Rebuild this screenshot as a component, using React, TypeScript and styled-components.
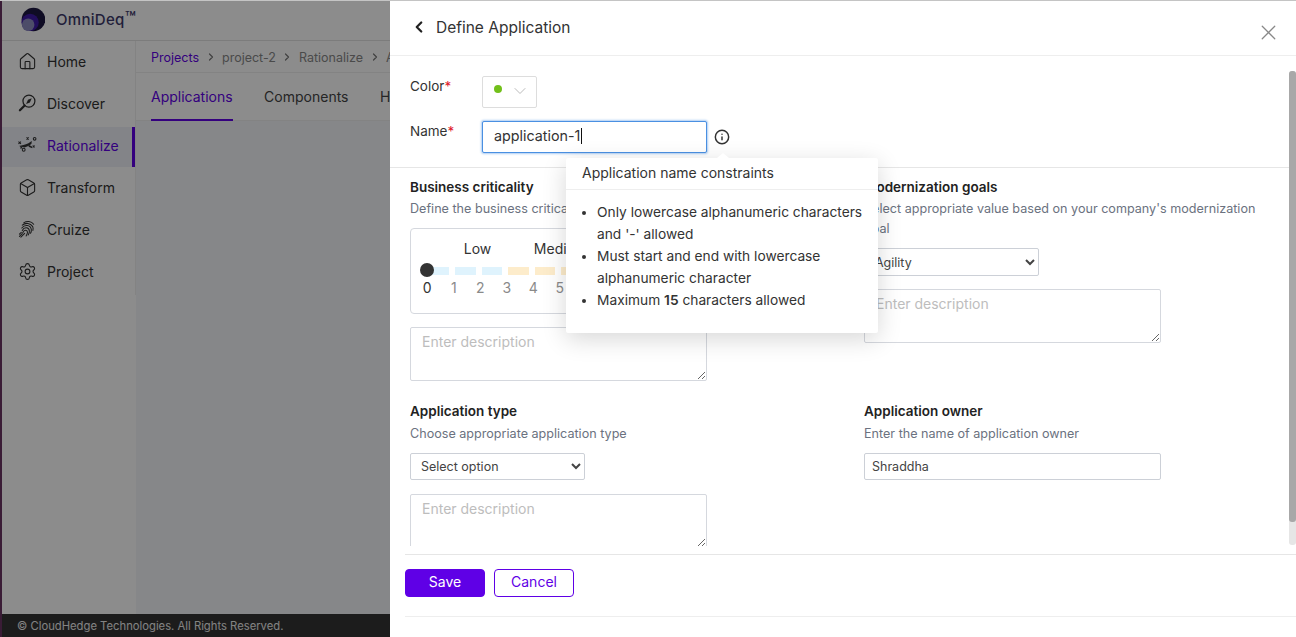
import React from 'react';
import styled, {createGlobalStyle} from 'styled-components';
import {Box, ChevronDown, ChevronLeft, ChevronRight, Home, Info, Settings, X} from 'lucide-react';

const font = `Inter, "Noto Sans", Roboto, sans-serif`;

const GlobalStyle = createGlobalStyle`
	html, body {
		margin: 0;
		height: 100%;
		overflow: hidden;
		background: #fff;
	}
	* {
		box-sizing: border-box;
	}
	body {
		font-family: ${font};
		color: #333;
	}
`;

const LogoMark = () => (
	<svg width='25' height='25' viewBox='0 0 26 26'>
		<circle cx='14' cy='13' r='12.3' fill='#1d1742' />
		<circle cx='10.5' cy='16' r='9' fill='#3f1aa8' />
		<circle cx='8.5' cy='18.5' r='6.5' fill='#8d8cc0' />
	</svg>
);

const DiscoverIcon = () => (
	<svg width='20' height='20' viewBox='0 0 20 20' fill='none' stroke='currentColor' strokeWidth='1.3'>
		<circle cx='11.5' cy='8' r='6.3' />
		<path d='M8.5 11l2-4.5 4-1.5-2 4.5z' fill='currentColor' stroke='none' />
		<path d='M7 12.6L2 17.6' strokeWidth='2.4' strokeLinecap='round' />
	</svg>
);

const TacticIcon = () => (
	<svg width='20' height='19' viewBox='0 0 20 19' fill='none' stroke='currentColor' strokeWidth='1.1'>
		<path d='M.5 5.500l2.600 2.400M3.100 5.500L.5 7.900M9 1l2.200 2.200M11.200 1L9 3.200M2.500 10.500l2 2M4.500 10.500l-2 2M15.500 9.500l2 2M17.500 9.500l-2 2' />
		<circle cx='6' cy='14' r='1.500' />
		<circle cx='17.500' cy='2.500' r='1.400' />
		<path d='M1 10c3-.4 6.500-1 10-2.800l3.500-2.500-.3 3-2.200 1.800-5 2z' fill='currentColor' stroke='none' />
		<path d='M12 9l3 1.800v1.700l-4-1.800z' fill='currentColor' stroke='none' />
	</svg>
);

const PrintIcon = () => (
	<svg width='20' height='20' viewBox='0 0 20 20' fill='none' stroke='currentColor' strokeWidth='1.1' strokeLinecap='round'>
		<path d='M6 3.500C9 1.500 14 1.500 16.500 5' />
		<path d='M4.500 6C8 3 13 3.500 15.500 7.500c.5 1.200.5 2.500.2 4' />
		<path d='M4 9c3-4 9-3.500 10 1.500.2 1.500-.2 3-.8 4' />
		<path d='M4.500 11.500c2-4 7-3.500 7.500.5.200 1.500-.5 3-1.300 4.300' />
		<path d='M5 14c1.500-4 5-3 5-.5 0 1.200-.6 2.500-1.500 3.800' />
		<path d='M1.500 17.800l3-3M3 18.500l4-4M1.500 15.500l2-2' />
	</svg>
);

const navItems = [
	{label: 'Home', icon: <Home size={19} strokeWidth={1.4} />},
	{label: 'Discover', icon: <DiscoverIcon />},
	{label: 'Rationalize', icon: <TacticIcon />, active: true},
	{label: 'Transform', icon: <Box size={19} strokeWidth={1.4} />},
	{label: 'Cruize', icon: <PrintIcon />},
	{label: 'Project', icon: <Settings size={19} strokeWidth={1.4} />},
];

const ticks = [0, 1, 2, 3, 4, 5, 6, 7, 8, 9, 10];

const App = () => {
	return (
		<>
			<GlobalStyle />
			<Page>
				<Backdrop>
					<TopBar>
						<LogoMark />
						<Brand>
							OmniDeq<BrandTm>™</BrandTm>
						</Brand>
					</TopBar>
					<Columns>
						<Sidebar>
							{navItems.map(item => (
								<NavItem key={item.label} $active={item.active}>
									<NavIcon>{item.icon}</NavIcon>
									{item.label}
								</NavItem>
							))}
						</Sidebar>
						<Main>
							<Breadcrumbs>
								<Crumb $link>Projects</Crumb>
								<ChevronRight size={12} strokeWidth={2.4} />
								<Crumb>project-2</Crumb>
								<ChevronRight size={12} strokeWidth={2.4} />
								<Crumb>Rationalize</Crumb>
								<ChevronRight size={12} strokeWidth={2.4} />
								<Crumb>Applications</Crumb>
							</Breadcrumbs>
							<Tabs>
								<Tab $active>Applications</Tab>
								<Tab>Components</Tab>
								<Tab>Hosts</Tab>
							</Tabs>
						</Main>
					</Columns>
					<PageFooter>© CloudHedge Technologies. All Rights Reserved.</PageFooter>
					<Dim />
				</Backdrop>

				<Drawer>
					<DrawerHeader>
						<BackButton>
							<ChevronLeft size={18} strokeWidth={3} />
						</BackButton>
						<DrawerTitle>Define Application</DrawerTitle>
						<CloseButton>
							<X size={25} strokeWidth={1.2} />
						</CloseButton>
					</DrawerHeader>

					<DrawerBody>
						<ScrollTrack>
							<ScrollThumb />
						</ScrollTrack>
						<IdentityBlock>
							<FieldRow>
								<RowLabel>
									Color<Required>*</Required>
								</RowLabel>
								<ColorPicker>
									<ColorDot />
									<ChevronDown size={20} strokeWidth={1.2} color='#bbb' />
								</ColorPicker>
							</FieldRow>
							<FieldRow>
								<RowLabel>
									Name<Required>*</Required>
								</RowLabel>
								<NameField>
									<NameInput defaultValue='application-1' />
									<Caret />
								</NameField>
								<InfoIcon>
									<Info size={16} strokeWidth={2.2} />
								</InfoIcon>
							</FieldRow>
							<Popover>
								<PopoverTitle>Application name constraints</PopoverTitle>
								<PopoverList>
									<li>Only lowercase alphanumeric characters and '-' allowed</li>
									<li>Must start and end with lowercase alphanumeric character</li>
									<li>
										Maximum <strong>15</strong> characters allowed
									</li>
								</PopoverList>
							</Popover>
						</IdentityBlock>

						<SectionGrid>
							<Section>
								<SectionTitle>Business criticality</SectionTitle>
								<SectionHint>Define the business criticality of this application</SectionHint>
								<SliderCard>
									<SliderLabels>
										<SliderLabel>Low</SliderLabel>
										<SliderLabel>Medium</SliderLabel>
										<SliderLabel>High</SliderLabel>
									</SliderLabels>
									<SliderTrack>
										<SliderThumb />
										{ticks.slice(1).map(tick => (
											<TrackPiece key={tick} $level={tick < 4 ? 'low' : tick < 7 ? 'mid' : 'high'} />
										))}
									</SliderTrack>
									<TickRow>
										{ticks.map(tick => (
											<Tick key={tick} $current={tick === 0}>
												{tick}
											</Tick>
										))}
									</TickRow>
								</SliderCard>
								<Description placeholder='Enter description' />
							</Section>

							<Section>
								<SectionTitle>Modernization goals</SectionTitle>
								<SectionHint>Select appropriate value based on your company's modernization goal</SectionHint>
								<Dropdown $width={175} $height={28} defaultValue='Agility'>
									<option>Agility</option>
								</Dropdown>
								<Description placeholder='Enter description' />
							</Section>

							<Section>
								<SectionTitle>Application type</SectionTitle>
								<SectionHint>Choose appropriate application type</SectionHint>
								<Dropdown $width={175} $height={27} defaultValue='Select option'>
									<option>Select option</option>
								</Dropdown>
								<Description placeholder='Enter description' />
							</Section>

							<Section>
								<SectionTitle>Application owner</SectionTitle>
								<SectionHint>Enter the name of application owner</SectionHint>
								<OwnerInput defaultValue='Shraddha' />
							</Section>
						</SectionGrid>
					</DrawerBody>

					<DrawerFooter>
						<SaveButton>Save</SaveButton>
						<CancelButton>Cancel</CancelButton>
					</DrawerFooter>
				</Drawer>
			</Page>
		</>
	);
};

export default App;

const Page = styled.div`
	display: flex;
	height: 637px;
	width: 1296px;
	overflow: hidden;
	border-top: 1px solid #c4c4c4;
`;

const Backdrop = styled.div`
	position: relative;
	display: flex;
	flex-direction: column;
	width: 390px;
	flex-shrink: 0;
	overflow: hidden;
	background: #fff;
	border-left: 2px solid #3a1c36;
`;

const Dim = styled.div`
	position: absolute;
	inset: 0;
	background: rgba(0, 0, 0, 0.45);
`;

const TopBar = styled.div`
	display: flex;
	align-items: center;
	gap: 11px;
	height: 40px;
	flex-shrink: 0;
	padding-left: 18px;
	padding-bottom: 2px;
	border-bottom: 1px solid #e2e2e2;
`;

const Brand = styled.span`
	font-size: 15px;
	font-weight: 500;
	letter-spacing: 0.3px;
	color: #3d3a6b;
`;

const BrandTm = styled.span`
	font-size: 18px;
	line-height: 0;
	letter-spacing: 0;
`;

const Columns = styled.div`
	display: flex;
	flex: 1;
`;

const Sidebar = styled.nav`
	display: flex;
	flex-direction: column;
	gap: 2px;
	width: 134px;
	height: 254px;
	flex-shrink: 0;
	padding-top: 2px;
	border-right: 1px solid #eee;
`;

const NavItem = styled.div<{$active?: boolean}>`
	display: flex;
	align-items: center;
	gap: 10px;
	height: 40px;
	padding: 0 0 4px 16px;
	font-size: 14px;
	color: ${p => (p.$active ? '#5f00e6' : '#333')};
	background: ${p => (p.$active ? '#eef0f8' : 'transparent')};
	border-right: ${p => (p.$active ? '3px solid #5f00e6' : 'none')};
	svg {
		color: #333;
	}
`;

const NavIcon = styled.span`
	display: flex;
	justify-content: center;
	width: 19px;
`;

const Main = styled.main`
	flex: 1;
	min-width: 0;
	background: #f5f6fa;
`;

const Breadcrumbs = styled.div`
	display: flex;
	align-items: center;
	gap: 5.5px;
	height: 32px;
	padding: 1px 0 0 15px;
	background: #fff;
	border-bottom: 1px solid #eee;
	color: #777;
	white-space: nowrap;

	svg {
		flex-shrink: 0;
	}
`;

const Crumb = styled.span<{$link?: boolean}>`
	flex-shrink: 0;
	font-size: 12.5px;
	color: ${p => (p.$link ? '#5f00e6' : '#888')};
`;

const Tabs = styled.div`
	display: flex;
	gap: 31.5px;
	height: 48px;
	padding-left: 15px;
	background: #fff;
	border-bottom: 1px solid #eee;
	white-space: nowrap;
`;

const Tab = styled.div<{$active?: boolean}>`
	display: flex;
	flex-shrink: 0;
	align-items: center;
	height: 48px;
	font-size: 14px;
	color: ${p => (p.$active ? '#5f00e6' : '#444')};
	border-bottom: 2px solid ${p => (p.$active ? '#5f00e6' : 'transparent')};
`;

const PageFooter = styled.footer`
	display: flex;
	align-items: center;
	height: 23px;
	flex-shrink: 0;
	padding-left: 15px;
	background: #333;
	color: #eee;
	font-size: 11.25px;
	white-space: nowrap;
`;

const Drawer = styled.aside`
	display: flex;
	flex-direction: column;
	flex: 1;
	min-width: 0;
	background: #fff;
`;

const DrawerHeader = styled.header`
	display: flex;
	align-items: center;
	height: 55px;
	flex-shrink: 0;
	padding: 0 15px 0 20px;
	border-bottom: 1px solid #eee;
`;

const BackButton = styled.span`
	display: flex;
	width: 26px;
	margin-bottom: 2px;
	color: #222;
`;

const DrawerTitle = styled.h1`
	flex: 1;
	margin: 0 0 1px;
	font-size: 15.5px;
	font-weight: 400;
	color: #333;
`;

const CloseButton = styled.span`
	display: flex;
	margin-top: 8px;
	color: #888;
`;

const DrawerBody = styled.div`
	position: relative;
	height: 490px;
	flex-shrink: 0;
	overflow: hidden;
`;

const ScrollTrack = styled.div`
	position: absolute;
	top: 15px;
	right: 0;
	width: 7px;
	height: 474px;
	background: #e6e6e6;
	border-radius: 3px;
`;

const ScrollThumb = styled.div`
	height: 451px;
	background: #a8a8a8;
	border-radius: 3px;
`;

const IdentityBlock = styled.div`
	position: relative;
	display: flex;
	flex-direction: column;
	gap: 13px;
	height: 112px;
	margin-right: 7px;
	padding: 20px 0 0 20px;
	border-bottom: 1px solid #e6e6e6;
`;

const FieldRow = styled.div`
	display: flex;
	align-items: flex-start;
`;

const RowLabel = styled.label`
	width: 72px;
	padding-top: 2px;
	font-size: 13.5px;
	color: #333;
`;

const Required = styled.span`
	color: #e0202a;
`;

const ColorPicker = styled.div`
	display: flex;
	align-items: center;
	gap: 8px;
	width: 55px;
	height: 32px;
	padding: 0 0 2px 11px;
	border: 1px solid #ddd;
	border-radius: 2px;
`;

const ColorDot = styled.span`
	width: 8px;
	height: 8px;
	border-radius: 50%;
	background: #72c01a;
	margin-bottom: 4px;
`;

const NameField = styled.div`
	position: relative;
	display: flex;
`;

const NameInput = styled.input`
	width: 225px;
	height: 32px;
	padding: 0 11px 3px;
	border: 1px solid #4a90e2;
	border-radius: 2px;
	box-shadow: 0 0 2px 1px rgba(74, 144, 226, 0.45);
	outline: none;
	font-family: ${font};
	font-size: 14.3px;
	color: #333;
`;

const Caret = styled.span`
	position: absolute;
	top: 7px;
	left: 99px;
	width: 1px;
	height: 16px;
	background: #111;
`;

const InfoIcon = styled.span`
	display: flex;
	margin: 8px 0 0 7px;
	color: #333;
`;

const Popover = styled.div`
	position: absolute;
	top: 102px;
	left: 176px;
	z-index: 2;
	width: 312px;
	height: 175px;
	background: #fff;
	box-shadow: 0 6px 24px rgba(0, 0, 0, 0.16);
	border-radius: 2px;

	&::before {
		content: '';
		position: absolute;
		top: -5px;
		left: 151px;
		border-left: 6px solid transparent;
		border-right: 6px solid transparent;
		border-bottom: 5px solid #fff;
	}
`;

const PopoverTitle = styled.div`
	display: flex;
	align-items: center;
	height: 32px;
	padding: 0 0 2px 16px;
	border-bottom: 1px solid #eee;
	font-size: 14px;
	color: #333;
`;

const PopoverList = styled.ul`
	margin: 0;
	padding: 11px 0 0 31px;
	font-size: 13.75px;
	line-height: 22px;
	color: #333;

	strong {
		font-weight: 600;
	}
`;

const SectionGrid = styled.div`
	display: grid;
	grid-template-columns: 454px 1fr;
	grid-template-rows: 225px 224px;
	padding: 9px 0 0 20px;
`;

const SectionTitle = styled.h3`
	margin: 0;
	font-size: 13.5px;
	line-height: 20px;
	font-weight: 600;
	color: #222;
`;

const Section = styled.section`
	display: flex;
	flex-direction: column;
	align-items: flex-start;
	padding-right: 28px;

	&:nth-child(n + 3) ${SectionTitle} {
		margin: -1px 0 1px;
	}
`;

const SectionHint = styled.p`
	margin: 2px 0 9px;
	font-size: 12.6px;
	line-height: 20px;
	color: #6b7280;
`;

const SliderCard = styled.div`
	width: 297px;
	height: 86px;
	padding-top: 11px;
	border: 1px solid #d5d8de;
	border-radius: 4px;
`;

const SliderLabels = styled.div`
	display: grid;
	grid-template-columns: 83px 83px 83px;
	padding-left: 25px;
	font-size: 14px;
	line-height: 18px;
	color: #333;
`;

const SliderLabel = styled.span`
	text-align: center;
`;

const SliderTrack = styled.div`
	position: relative;
	display: flex;
	gap: 6px;
	height: 8px;
	margin: 9px 0 0 17.5px;
`;

const SliderThumb = styled.span`
	position: absolute;
	left: -8.5px;
	top: -4px;
	width: 14px;
	height: 14px;
	border-radius: 50%;
	background: #333;
`;

const TrackPiece = styled.span<{$level: 'low' | 'mid' | 'high'}>`
	width: 20.5px;
	flex-shrink: 0;
	background: ${p => (p.$level === 'low' ? '#dff3fd' : p.$level === 'mid' ? '#fdeccb' : '#fbd9d9')};
`;

const TickRow = styled.div`
	display: flex;
	margin: 4px 0 0 3px;
`;

const Tick = styled.span<{$current?: boolean}>`
	width: 26.5px;
	text-align: center;
	font-size: 14px;
	color: ${p => (p.$current ? '#333' : '#8a8a8a')};
`;

const Description = styled.textarea`
	width: 297px;
	height: 54px;
	margin-top: 13px;
	padding: 3px 11px;
	border: 1px solid #d5d8de;
	border-radius: 2px;
	outline: none;
	font-family: ${font};
	font-size: 14px;
	line-height: 22px;
	color: #333;

	&::placeholder {
		color: #bdbdbd;
	}
`;

const Dropdown = styled.select<{$width: number; $height: number}>`
	width: ${p => p.$width}px;
	height: ${p => p.$height}px;
	margin-bottom: ${p => 28 - p.$height}px;
	padding: 0 6px;
	background: #fff;
	border: 1px solid #ccd0d7;
	border-radius: 2px;
	outline: none;
	font-family: ${font};
	font-size: 12.5px;
	color: #444;
`;

const OwnerInput = styled.input`
	width: 297px;
	height: 27px;
	padding: 0 7px;
	border: 1px solid #ccd0d7;
	border-radius: 2px;
	outline: none;
	font-family: ${font};
	font-size: 12.5px;
	color: #444;
`;

const DrawerFooter = styled.div`
	display: flex;
	gap: 9px;
	height: 63px;
	margin: 8px 0 0 15px;
	padding-top: 14px;
	border-top: 1px solid #e6e6e6;
	border-bottom: 1px solid #eee;
`;

const SaveButton = styled.button`
	width: 80px;
	height: 28px;
	padding: 0 0 3px;
	background: #5f00e6;
	border: 1px solid #5f00e6;
	border-radius: 4px;
	font-family: ${font};
	font-size: 14px;
	color: #fff;
`;

const CancelButton = styled(SaveButton)`
	background: #fff;
	color: #5f00e6;
`;
